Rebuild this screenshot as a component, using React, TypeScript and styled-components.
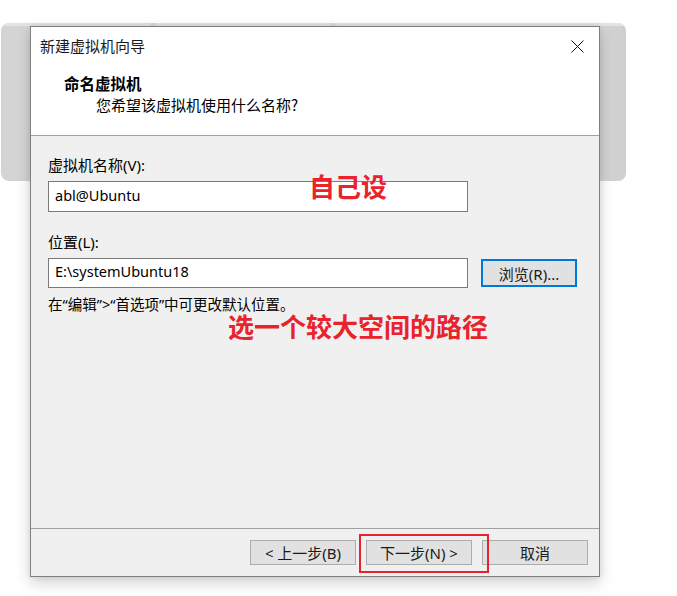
import React from 'react';
import styled, { createGlobalStyle } from 'styled-components';

const GlobalStyle = createGlobalStyle`
  html, body {
    margin: 0;
    padding: 0;
    background: #ffffff;
  }
  body {
    font-family: "Noto Sans", "Noto Sans CJK SC", sans-serif;
  }
`;

const Page = styled.div`
  position: relative;
  width: 677px;
  height: 596px;
  padding-top: 23px;
  box-sizing: border-box;
  overflow: hidden;
`;

const Backdrop = styled.div`
  margin-left: 1px;
  width: 625px;
  height: 158px;
  border-radius: 8px;
  background: linear-gradient(90deg, #d4d4d4 0%, #dadada 40%, #d6d6d6 94%, #cfcfcf 100%);
  display: flex;
  gap: 4px;
  overflow: hidden;
`;

const BackdropTab = styled.div<{ $grow: number }>`
  flex: ${({ $grow }) => $grow};
  height: 3px;
  background: #e4e4e4;
  border-radius: 0 0 4px 4px;
`;

const Dialog = styled.div`
  position: absolute;
  left: 30px;
  top: 26px;
  width: 570px;
  height: 551px;
  box-sizing: border-box;
  border: 1px solid #7f7f7f;
  background: #f0f0f0;
  display: flex;
  flex-direction: column;
  box-shadow: 0 6px 14px rgba(0, 0, 0, 0.18), 0 0 6px rgba(0, 0, 0, 0.08);
  color: #000;
`;

const Header = styled.div`
  height: 109px;
  box-sizing: border-box;
  background: #ffffff;
  border-bottom: 1px solid #a0a0a0;
  display: flex;
  flex-direction: column;
`;

const TitleBar = styled.div`
  height: 38px;
  display: flex;
  align-items: center;
  justify-content: space-between;
  padding: 0 10px 0 9px;
`;

const Title = styled.span`
  font-family: "Noto Sans CJK SC", sans-serif;
  font-size: 15px;
  line-height: 20px;
  color: #1a1a1a;
`;

const CloseButton = styled.div`
  width: 16px;
  height: 16px;
  display: flex;
  align-items: center;
  justify-content: center;
  margin-right: 4px;
`;

const Heading = styled.div`
  margin: 8px 0 0 33px;
  font-family: "Noto Sans CJK SC", sans-serif;
  font-weight: 700;
  font-size: 15.5px;
  line-height: 20px;
`;

const SubHeading = styled.div`
  margin: 2px 0 0 65px;
  font-family: "Noto Sans CJK SC", sans-serif;
  font-size: 15px;
  line-height: 20px;
`;

const Body = styled.div`
  position: relative;
  flex: 1;
  padding: 19px 0 0 17px;
  display: flex;
  flex-direction: column;
`;

const Label = styled.div<{ $gap: number }>`
  margin-top: ${({ $gap }) => $gap}px;
  font-size: 15px;
  line-height: 20px;
`;

const Field = styled.div<{ $height: number }>`
  width: 420px;
  height: ${({ $height }) => $height}px;
  box-sizing: border-box;
  border: 1px solid #7a7a7a;
  background: #ffffff;
  padding-left: 6px;
  display: flex;
  align-items: center;
  font-size: 14.5px;
  padding-bottom: 4px;
`;

const FieldRow = styled.div`
  margin-top: 6px;
  display: flex;
  align-items: center;
  gap: 13px;
`;

const FirstField = styled.div`
  margin-top: 6px;
`;

const Button = styled.div<{ $primary?: boolean }>`
  width: 106px;
  height: 25px;
  box-sizing: border-box;
  background: #e1e1e1;
  border: ${({ $primary }) => ($primary ? '2px solid #0078d7' : '1px solid #adadad')};
  display: flex;
  align-items: center;
  justify-content: center;
  font-size: 15px;
  color: #1a1a1a;
`;

const BrowseButton = styled(Button)`
  width: 96px;
  height: 28px;
`;

const Hint = styled.div`
  margin-top: 7px;
  font-size: 14.5px;
  line-height: 18px;
`;

const Note = styled.div<{ $left: number; $top: number }>`
  position: absolute;
  left: ${({ $left }) => $left}px;
  top: ${({ $top }) => $top}px;
  font-family: "Noto Sans CJK SC", sans-serif;
  font-weight: 700;
  font-size: 26px;
  line-height: 24px;
  color: #e8232b;
  white-space: nowrap;
`;

const Footer = styled.div`
  position: relative;
  height: 48px;
  box-sizing: border-box;
  border-top: 1px solid #a0a0a0;
  display: flex;
  justify-content: flex-end;
  align-items: flex-start;
  gap: 10px;
  padding: 11px 11px 0 0;
`;

const Highlight = styled.div`
  position: absolute;
  left: 328px;
  top: 5px;
  width: 130px;
  height: 39px;
  box-sizing: border-box;
  border: 2px solid #e8232b;
  pointer-events: none;
`;

export default function App() {
  return (
    <>
      <GlobalStyle />
      <Page>
        <Backdrop>
          <BackdropTab $grow={150} />
          <BackdropTab $grow={175} />
          <BackdropTab $grow={290} />
        </Backdrop>
        <Dialog>
          <Header>
            <TitleBar>
              <Title>新建虚拟机向导</Title>
              <CloseButton>
                <svg width="13" height="13" viewBox="0 0 13 13">
                  <path d="M0.5 0.5 L12.5 12.5 M12.5 0.5 L0.5 12.5" stroke="#111" strokeWidth="1" fill="none" />
                </svg>
              </CloseButton>
            </TitleBar>
            <Heading>命名虚拟机</Heading>
            <SubHeading>您希望该虚拟机使用什么名称?</SubHeading>
          </Header>
          <Body>
            <Label $gap={0}>虚拟机名称(V):</Label>
            <FirstField>
              <Field $height={31}>abl@Ubuntu</Field>
            </FirstField>
            <Label $gap={20}>位置(L):</Label>
            <FieldRow>
              <Field $height={30}>E:\systemUbuntu18</Field>
              <BrowseButton $primary>浏览(R)...</BrowseButton>
            </FieldRow>
            <Hint>在“编辑”&gt;“首选项”中可更改默认位置。</Hint>
            <Note $left={278} $top={38}>自己设</Note>
            <Note $left={197} $top={178}>选一个较大空间的路径</Note>
          </Body>
          <Footer>
            <Button>&lt; 上一步(B)</Button>
            <Button>下一步(N) &gt;</Button>
            <Button>取消</Button>
            <Highlight />
          </Footer>
        </Dialog>
      </Page>
    </>
  );
}
